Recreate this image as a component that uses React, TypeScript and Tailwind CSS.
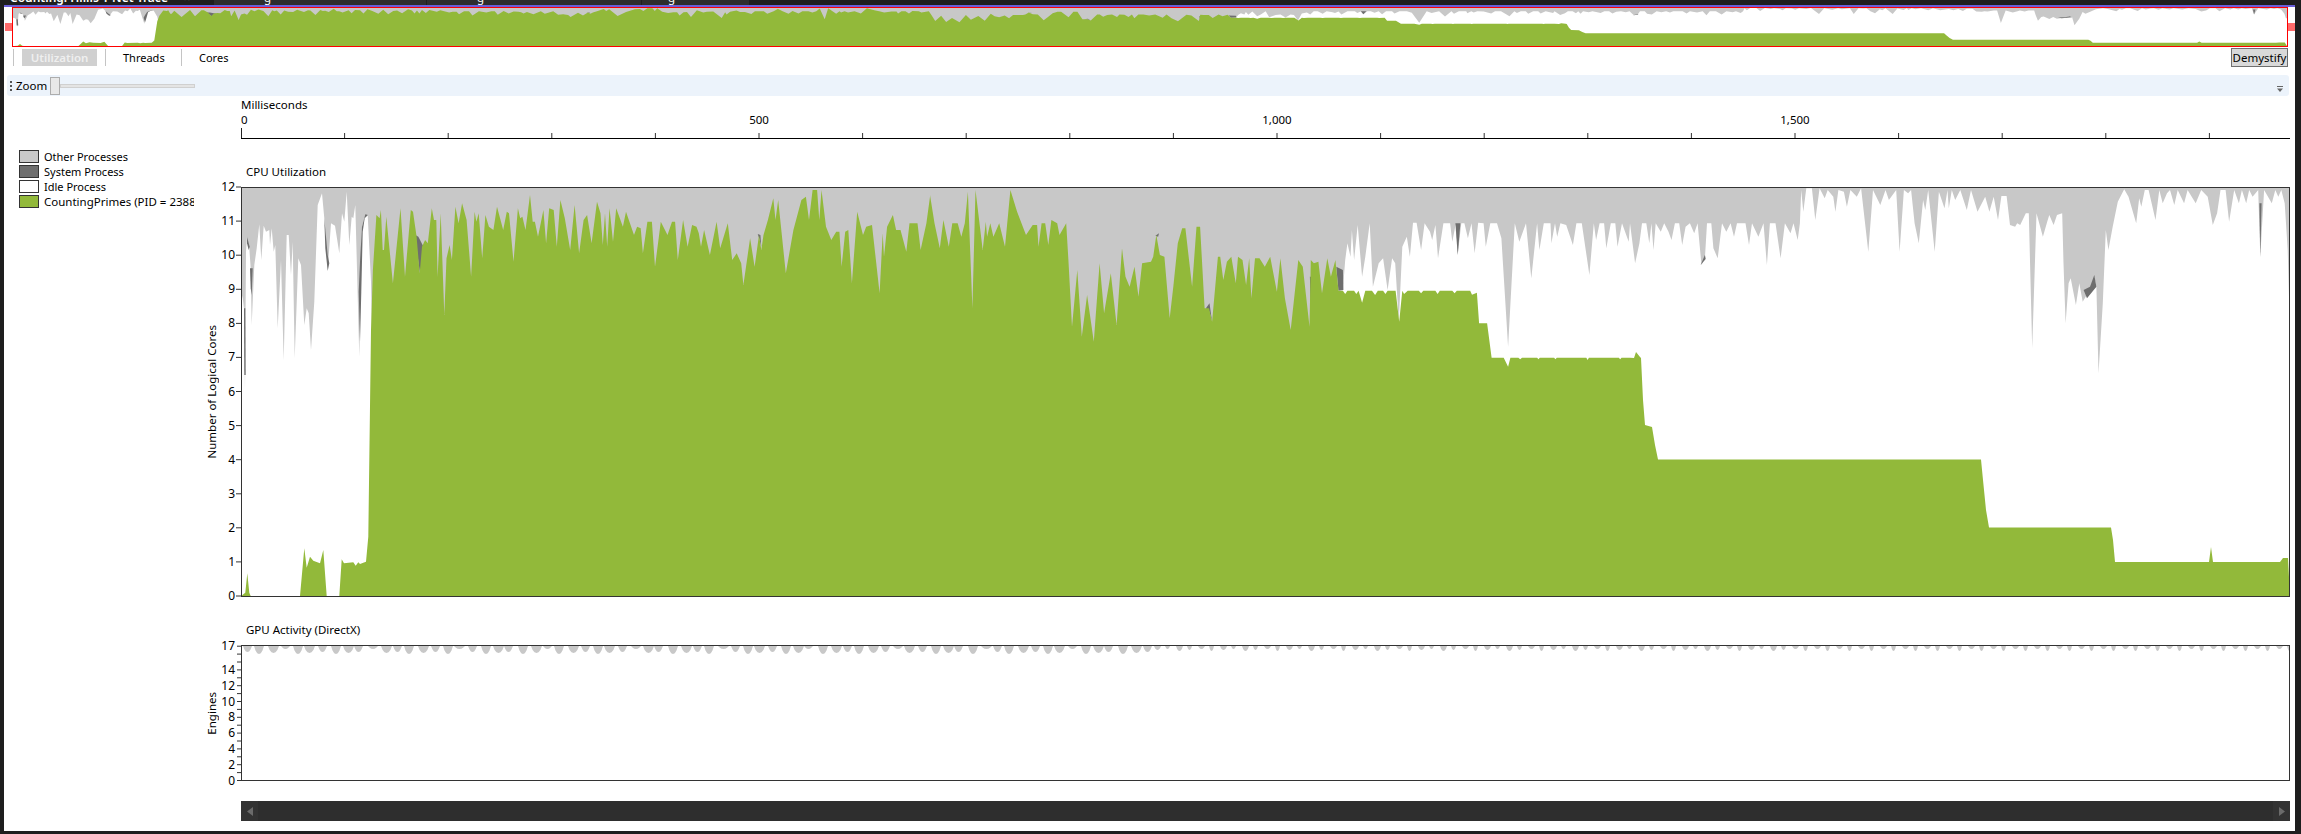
const p = (a: number[], ox: number, sx: number, oy: number, sy: number): number[][] => {
  const out: number[][] = [];
  for (let i = 0; i < a.length; i += 2) out.push([ox + a[i] / sx, oy + a[i + 1] / sy]);
  return out;
};
const z4 = (a: number[]) => p(a, 180, 3, 530, 3);
const z6 = (a: number[]) => p(a, 230, 2.24, 180, 3);
const z7 = (a: number[]) => p(a, 930, 2.24, 180, 3);
const z8 = (a: number[]) => p(a, 1630, 2.337, 180, 3);
const z11 = (a: number[]) => p(a, 236, 3, 185, 3);
const d = (pts: number[][]) => "M" + pts.map(([x, y]) => `${x.toFixed(1)},${y.toFixed(1)}`).join("L") + "Z";

const greenPts = [
  ...z4([184, 198, 186, 196, 196, 188, 202, 130, 208, 188, 212, 198, 360, 198, 373, 55, 380, 113, 390, 80, 400, 92, 420, 100, 430, 60, 440, 198, 478, 198, 485, 88, 492, 100, 520, 97, 527, 107, 535, 97, 540, 102, 558, 95, 565, 20]),
  [371, 330],
  ...z6([320, 270, 328, 105, 335, 115, 338, 90, 342, 210, 345, 210, 350, 110, 365, 310, 382, 85, 392, 290, 405, 90, 410, 95, 418, 170, 425, 280, 430, 200, 437, 180, 443, 190, 452, 85, 457, 120, 462, 120, 465, 290, 472, 100, 480, 405, 485, 235, 492, 195, 497, 240, 505, 80, 512, 130, 520, 70, 530, 120, 540, 290, 548, 95, 552, 125, 557, 100, 565, 235, 572, 105, 580, 140, 590, 150, 598, 80, 612, 150, 620, 95, 625, 100, 635, 245, 645, 85, 650, 115, 655, 110, 662, 150, 672, 45, 678, 125, 683, 125, 690, 170, 702, 90, 708, 190, 715, 85, 725, 90, 732, 200, 740, 60, 750, 115, 762, 210, 772, 75, 782, 220, 792, 120, 800, 105, 810, 190, 822, 65, 830, 100, 835, 195, 840, 100, 845, 200, 850, 85, 858, 185, 865, 85, 880, 140, 887, 95, 905, 165, 912, 140, 920, 145, 925, 220, 935, 125, 945, 125, 952, 260, 965, 125, 980, 165, 990, 125, 997, 125, 1003, 240, 1015, 120, 1025, 200, 1035, 135, 1045, 140, 1050, 160, 1055, 200, 1062, 150, 1075, 225, 1090, 125, 1098, 205, 1115, 130, 1125, 240, 1135, 220, 1145, 250, 1150, 315, 1165, 175, 1175, 260, 1185, 165, 1190, 210, 1195, 165, 1205, 120, 1217, 55, 1222, 120, 1228, 60, 1245, 280, 1262, 150, 1280, 60, 1290, 50, 1297, 120, 1305, 30, 1315, 30, 1320, 120, 1325, 30, 1335, 140, 1347, 180, 1358, 155, 1365, 155, 1370, 260, 1378, 155, 1385, 150, 1393, 310, 1405, 95, 1418, 165, 1425, 140, 1438, 135, 1455, 340, 1462, 160, 1465, 230, 1472, 140, 1485, 105, 1492, 150, 1502, 150, 1515, 215, 1522, 130, 1540, 130, 1547, 210, 1560, 130, 1568, 50]),
  ...z7([0, 45, 10, 130, 22, 205, 30, 120, 42, 200, 50, 130, 62, 130, 70, 170, 78, 130, 85, 35, 95, 385, 102, 30, 118, 210, 125, 125, 128, 170, 135, 130, 142, 170, 155, 130, 168, 200, 180, 30, 195, 95, 205, 130, 215, 165, 230, 135, 240, 135, 243, 200, 250, 130, 258, 130, 265, 195, 272, 120, 285, 130, 290, 165, 305, 130, 310, 240, 318, 440, 330, 270, 340, 470, 352, 345, 367, 485, 380, 250, 390, 400, 405, 280, 418, 435, 430, 205, 438, 290, 447, 320, 458, 260, 467, 350, 475, 250, 495, 245, 500, 230, 507, 165, 515, 225, 525, 230, 537, 415, 545, 320, 555, 190, 565, 145, 572, 145, 587, 320, 597, 140, 605, 140, 615, 385, 625, 385, 632, 425, 645, 230, 650, 230, 657, 300, 665, 245, 675, 230, 685, 310, 690, 230, 700, 240, 708, 315, 715, 235, 720, 355, 728, 235, 738, 235, 750, 260, 762, 230, 777, 335, 785, 235, 795, 355, 808, 450, 825, 240, 835, 260, 850, 440, 853, 240, 860, 250, 870, 245, 878, 340, 890, 235, 898, 290, 908, 240, 915, 332, 925, 332, 930, 342, 935, 332, 950, 332, 955, 342, 960, 332, 968, 368, 975, 332, 990, 332, 997, 345, 1003, 332, 1015, 332, 1020, 342, 1025, 332, 1043, 332, 1051, 425, 1058, 332, 1062, 342, 1070, 332, 1095, 332, 1100, 340, 1105, 332, 1132, 332, 1137, 342, 1142, 332, 1170, 332, 1175, 340, 1180, 332, 1210, 332, 1214, 344, 1225, 338, 1230, 430, 1248, 430, 1258, 533, 1285, 533, 1295, 560, 1300, 533, 1318, 533, 1322, 538, 1326, 533, 1360, 533, 1363, 538, 1366, 533, 1398, 533, 1401, 538, 1404, 533, 1470, 533, 1473, 540, 1476, 533, 1543, 533, 1546, 538, 1549, 533, 1568, 533]),
  [1634, 358], [1636, 352], [1640, 357], [1641, 358], [1643, 400], [1645, 425], [1652, 427], [1655, 445], [1658, 459.5], [1981, 459.5], [1983, 480], [1986, 510], [1989, 527.5], [2111, 527.5], [2113, 540], [2115, 562], [2209, 562], [2211, 547], [2213, 562], [2280, 562], [2283, 558], [2288, 558], [2290, 596],
];
const whiteLeft = [
  [241, 596],
  ...z11([15, 320, 20, 340, 24, 370, 27, 618, 30, 200, 33, 155, 40, 190, 44, 250, 47, 420, 55, 240, 62, 190, 70, 118, 76, 225, 83, 122, 90, 140, 100, 135, 102, 180, 107, 130, 113, 200, 118, 180, 125, 430, 135, 225, 143, 525, 152, 150, 158, 150, 165, 270, 170, 170, 176, 520, 187, 220, 195, 240, 205, 420, 212, 370, 218, 385, 225, 495, 235, 350, 245, 60, 258, 25, 265, 100, 275, 255, 285, 115, 297, 122, 310, 205, 318, 85, 325, 110, 332, 20, 340, 180, 347, 95, 352, 100, 358, 60, 370, 515, 378, 125, 388, 90, 395, 90, 405, 290, 410, 570]),
  [380, 596],
];
const whiteRight = [
  [1335, 596],
  ...z7([915, 330, 925, 330, 930, 240, 935, 190, 942, 230, 945, 150, 950, 240, 958, 135, 968, 290, 975, 230, 985, 130, 992, 320, 1005, 250, 1015, 235, 1025, 330, 1035, 235, 1042, 250, 1050, 425, 1058, 200, 1068, 170, 1075, 230, 1082, 128, 1090, 128, 1100, 210, 1108, 130, 1120, 155, 1125, 180, 1132, 135, 1138, 235, 1150, 130, 1165, 130, 1170, 185, 1178, 130, 1182, 225, 1190, 130, 1197, 130, 1205, 175, 1213, 130, 1220, 220, 1228, 128, 1240, 130, 1245, 200, 1255, 130, 1270, 130, 1280, 175, 1295, 500, 1310, 130, 1320, 185, 1335, 130, 1347, 295, 1360, 130, 1365, 210, 1375, 130, 1390, 130, 1392, 190, 1400, 130, 1405, 170, 1412, 130, 1425, 135, 1440, 195, 1448, 130, 1460, 130, 1477, 285, 1487, 130, 1492, 180, 1500, 130, 1510, 130, 1515, 205, 1525, 130, 1535, 130, 1540, 200, 1550, 130, 1565, 185]),
  ...z8([0, 130, 12, 250, 22, 190, 28, 130, 38, 130, 45, 190, 50, 130, 55, 210, 60, 130, 72, 155, 80, 130, 90, 155, 97, 180, 105, 130, 115, 130, 122, 195, 130, 140, 140, 130, 150, 160, 158, 130, 167, 255, 175, 235, 180, 130, 190, 130, 195, 205, 205, 235, 215, 130, 225, 155, 235, 130, 243, 170, 250, 130, 270, 130, 278, 195, 285, 130, 300, 170, 312, 130, 320, 255, 327, 130, 340, 130, 352, 235, 362, 130, 375, 160, 382, 130, 392, 180, 397, 130, 400, 30, 405, 95, 412, 25, 425, 25, 433, 120, 443, 25, 455, 55, 462, 30, 475, 50, 480, 95, 487, 30, 500, 35, 507, 80, 515, 30, 530, 50, 540, 25, 557, 215, 568, 30, 585, 75, 597, 30, 605, 60, 622, 30, 630, 215, 640, 30, 650, 40, 657, 30, 665, 130, 675, 190, 685, 60, 690, 90, 697, 30, 712, 215, 722, 35, 735, 85, 742, 30, 745, 85, 752, 30, 760, 60, 772, 30, 787, 90, 797, 30, 812, 95, 830, 50, 840, 95, 850, 50, 860, 120, 868, 48, 880, 48, 888, 135, 900, 140, 905, 130, 912, 135, 925, 100, 932, 100, 940, 505, 950, 100, 965, 170, 975, 125, 980, 105, 990, 135, 998, 105, 1010, 100, 1013, 250, 1018, 430, 1025, 310, 1030, 295, 1042, 375, 1050, 310, 1058, 365, 1065, 350, 1075, 330, 1085, 290, 1090, 320, 1095, 580, 1105, 370, 1112, 150, 1118, 210, 1128, 140, 1140, 65, 1155, 28, 1165, 50, 1183, 130, 1190, 55, 1195, 80, 1203, 30, 1212, 30, 1228, 120, 1237, 30, 1245, 70, 1255, 40, 1262, 30, 1272, 75, 1280, 30, 1295, 70, 1303, 30, 1322, 70, 1335, 30, 1350, 50, 1362, 135, 1372, 100, 1380, 30, 1392, 30, 1400, 125, 1412, 30, 1423, 70, 1430, 30, 1440, 70, 1447, 30, 1455, 50, 1468, 30, 1473, 230, 1482, 30, 1500, 70, 1508, 30, 1515, 50, 1522, 30, 1530, 70, 1537, 210, 1540, 350, 1545, 350]),
  [2290, 596],
];
const darkShapes = [
  z11([24, 370, 28, 370, 29, 570, 25, 570]),
  z11([33, 155, 41, 185, 38, 195, 33, 175]),
  z11([42, 250, 50, 250, 47, 330, 44, 310]),
  z11([265, 100, 275, 210, 280, 235, 275, 258, 268, 190]),
  z11([378, 125, 388, 88, 396, 90, 386, 100, 380, 140, 376, 320, 372, 470, 368, 320, 372, 230]),
  z6([415, 165, 422, 170, 435, 205, 426, 285, 418, 205]),
  z6([1182, 162, 1188, 165, 1190, 200, 1186, 178]),
  z7([910, 260, 925, 270, 926, 330, 915, 332]),
  z7([1177, 130, 1188, 130, 1182, 225]),
  z7([851, 290, 855, 290, 853, 400]),
  z7([618, 385, 626, 370, 632, 425, 626, 395]),
  z7([505, 167, 513, 160, 511, 170]),
  z8([1060, 330, 1075, 320, 1085, 285, 1090, 320, 1068, 355]),
  z8([1471, 70, 1476, 70, 1473, 230]),
  z8([165, 255, 175, 225, 177, 237]),
];

function CpuArea() {
  return (
    <>
      <rect x="241" y="187" width="2049" height="409" fill="#c8c8c8" />
      <path d={d(whiteLeft)} fill="#ffffff" />
      <path d={d(whiteRight)} fill="#ffffff" />
      {darkShapes.map((s, i) => (
        <path key={i} d={d(s)} fill="#6e6e6e" />
      ))}
      <path d={d(greenPts)} fill="#92b93a" />
    </>
  );
}

function gpuPath() {
  const pts: number[][] = [[242, 646]];
  let x = 243;
  let i = 0;
  while (x < 2288) {
    const early = x < 1150;
    const period = early ? 11 + ((i * 7) % 4) : 11;
    const w = early ? 9 + (i % 3) : 5 + (i % 2) * 2;
    const depth = early ? (i % 7 === 3 ? 3 : 6 + ((i * 5) % 3)) : x < 1800 ? 5 - (i % 3) : 5 - (i % 2) * 2;
    pts.push(
      [x, 646],
      [x + w * 0.15, 646 + depth * 0.55],
      [x + w * 0.32, 646 + depth * 0.9],
      [x + w * 0.5, 646 + depth],
      [x + w * 0.68, 646 + depth * 0.9],
      [x + w * 0.85, 646 + depth * 0.55],
      [x + w, 646],
    );
    x += period;
    i++;
  }
  pts.push([2289, 646]);
  return d(pts);
}

const timeTicks = Array.from({ length: 20 }, (_, i) => 241 + i * 103.6);
const cpuLabels = Array.from({ length: 13 }, (_, i) => i);
const gpuTicks = Array.from({ length: 18 }, (_, i) => i);
const gpuLabels = [0, 2, 4, 6, 8, 10, 12, 14, 17];

export default function App() {
  return (
    <div className="w-[2301px] h-[834px] overflow-hidden bg-[#1e1e1e] flex flex-col font-['Noto_Sans',sans-serif] text-[11.5px] leading-[16px] text-black">
      <div className="h-[5px] overflow-hidden flex text-white shrink-0">
        <div className="w-[213px] pl-[10px] font-semibold shrink-0">
          <div className="-mt-[10px] whitespace-nowrap text-[12px]">Counting: Hillis-T Net Trace &nbsp;&nbsp;&nbsp; ×</div>
        </div>
        <div className="w-[212px] ml-px bg-[#2d2d2d] pl-[50px]"><div className="-mt-[10px]">g</div></div>
        <div className="w-[214px] ml-px bg-[#2d2d2d] pl-[50px]"><div className="-mt-[10px]">g</div></div>
        <div className="w-[107px] ml-px bg-[#2d2d2d] pl-[26px]"><div className="-mt-[10px]">g</div></div>
      </div>
      <div className="h-[2px] ml-[4px] mr-[6px] bg-[#6a5fd8] shrink-0" />
      <div className="flex-1 ml-[4px] mr-[6px] mb-[3px] bg-white flex flex-col min-h-0">
        <div className="relative h-[40px] ml-[8px] mr-[7px] border border-[#ff0000] shrink-0">
          <svg className="block w-full h-full" viewBox="241 187 2049 409" preserveAspectRatio="none">
            <CpuArea />
          </svg>
          <div className="absolute -left-[8px] top-[15px] w-[7px] h-[8px] bg-[#ff6b6b]" />
          <div className="absolute -right-[8px] top-[15px] w-[7px] h-[8px] bg-[#ff6b6b]" />
        </div>
        <div className="h-[20px] flex items-start shrink-0">
          <div className="ml-[9px] mt-[2px] w-px h-[17px] bg-[#c4c4c4]" />
          <div className="ml-[8px] mt-[2px] w-[75px] h-[17px] bg-[#d0d0d0] text-[#efefef] font-semibold flex items-center justify-center">Utilization</div>
          <div className="ml-[8px] mt-[2px] w-px h-[17px] bg-[#c4c4c4]" />
          <div className="ml-[17px] mt-[2px] w-[58px] h-[17px] flex items-center text-[11px]">Threads</div>
          <div className="mt-[2px] w-px h-[17px] bg-[#c4c4c4]" />
          <div className="ml-[17px] mt-[2px] h-[17px] flex items-center text-[11px]">Cores</div>
          <div className="ml-auto mr-[7px] mt-[1px] w-[57px] h-[19px] bg-[#d9d9d9] border border-[#6f6f6f] flex items-center justify-center">Demystify</div>
        </div>
        <div className="relative ml-[3px] mr-[6px] mt-[8px] h-[21px] bg-[#ecf3fb] rounded-[3px] flex items-center shrink-0">
          <div className="ml-[3px] flex flex-col gap-[2px]">
            <div className="w-[2px] h-[2px] bg-[#555]" />
            <div className="w-[2px] h-[2px] bg-[#555]" />
            <div className="w-[2px] h-[2px] bg-[#555]" />
          </div>
          <span className="ml-[4px] w-[34px]">Zoom</span>
          <div className="w-[10px] h-[18px] bg-[#e8e8e8] border border-[#adadad]" />
          <div className="w-[135px] h-[4px] bg-[#e4e4e4] border border-[#d0d0d0]" />
          <svg className="absolute right-[5px] top-[11px]" width="7" height="7" viewBox="0 0 7 7">
            <path d="M0 0.5H6" stroke="#666" strokeWidth="1" />
            <path d="M0 2.5H6L3 6Z" fill="#666" />
          </svg>
        </div>
        <div className="flex-1 flex min-h-0">
          <div className="w-[190px] pl-[15px] pt-[53px] overflow-hidden shrink-0 text-[11px]">
            {[
              ["#c8c8c8", "Other Processes", ""],
              ["#6e6e6e", "System Process", ""],
              ["#ffffff", "Idle Process", ""],
              ["#92b93a", "CountingPrimes (PID = 2388)", "text-[11.5px]"],
            ].map(([c, t, size]) => (
              <div key={t} className="flex items-center h-[15px] whitespace-nowrap">
                <div className="w-[20px] h-[13px] border border-[#333] shrink-0" style={{ backgroundColor: c }} />
                <span className={`ml-[5px] ${size}`}>{t}</span>
              </div>
            ))}
          </div>
          <div className="w-[2096px] flex flex-col">
            <div className="pl-[47px] pt-[1px] h-[16px]">Milliseconds</div>
            <svg className="ml-[47px] block overflow-visible" width="2049" height="27" viewBox="241 112 2049 27">
              <path d="M241 138.5H2290" stroke="#000" strokeWidth="1" />
              <path d="M241.5 128V138" stroke="#222" strokeWidth="1" />
              {timeTicks.slice(1).map((x) => (
                <path key={x} d={`M${x.toFixed(1)} 133V138`} stroke="#333" strokeWidth="1" />
              ))}
              <text x="241" y="124" fontSize="11.5" fill="#000">0</text>
              <text x="759" y="124" fontSize="11.5" textAnchor="middle" fill="#000">500</text>
              <text x="1277" y="124" fontSize="11.5" textAnchor="middle" fill="#000">1,000</text>
              <text x="1795" y="124" fontSize="11.5" textAnchor="middle" fill="#000">1,500</text>
            </svg>
            <div className="pl-[52px] mt-[25px] h-[16px]">CPU Utilization</div>
            <div className="mt-[7px] flex h-[410px]">
              <div className="w-[26px] flex items-center justify-end">
                <span className="[writing-mode:vertical-rl] rotate-180 whitespace-nowrap">Number of Logical Cores</span>
              </div>
              <svg className="block overflow-visible" width="21" height="410" viewBox="220 187 21 410">
                {cpuLabels.map((v) => {
                  const y = 596 - v * 34.08;
                  return (
                    <g key={v}>
                      <path d={`M236 ${y.toFixed(1)}H241`} stroke="#333" strokeWidth="1" />
                      <text x="235" y={y + 4} fontSize="12" textAnchor="end" fill="#000">{v}</text>
                    </g>
                  );
                })}
              </svg>
              <div className="w-[2049px] h-[410px] border border-[#333]">
                <svg className="block w-full h-full" viewBox="242 188 2047 408" preserveAspectRatio="none">
                  <CpuArea />
                </svg>
              </div>
            </div>
            <div className="pl-[52px] mt-[25px] h-[16px]">GPU Activity (DirectX)</div>
            <div className="mt-[7px] flex h-[136px]">
              <div className="w-[26px] flex items-center justify-end">
                <span className="[writing-mode:vertical-rl] rotate-180 whitespace-nowrap">Engines</span>
              </div>
              <svg className="block overflow-visible" width="21" height="136" viewBox="220 645 21 136">
                {gpuTicks.map((v) => {
                  const y = 780.5 - v * 7.9;
                  return <path key={v} d={`M237 ${y.toFixed(1)}H241`} stroke="#333" strokeWidth="1" />;
                })}
                {gpuLabels.map((v) => (
                  <text key={v} x="235" y={780.5 - v * 7.9 + 4} fontSize="12" textAnchor="end" fill="#000">{v}</text>
                ))}
              </svg>
              <div className="w-[2049px] h-[136px] border border-[#333]">
                <svg className="block w-full h-full" viewBox="242 646 2047 134" preserveAspectRatio="none">
                  <path d={gpuPath()} fill="#c8c8c8" />
                </svg>
              </div>
            </div>
            <div className="ml-[47px] mt-[20px] w-[2049px] h-[20px] bg-[#2e2e2e] flex justify-between">
              <div className="w-[17px] h-full bg-[#333333] flex items-center justify-center">
                <svg width="6" height="9" viewBox="0 0 6 9"><path d="M6 0V9L0 4.5Z" fill="#6b6b6b" /></svg>
              </div>
              <div className="w-[17px] h-full bg-[#333333] flex items-center justify-center">
                <svg width="6" height="9" viewBox="0 0 6 9"><path d="M0 0V9L6 4.5Z" fill="#6b6b6b" /></svg>
              </div>
            </div>
          </div>
        </div>
      </div>
    </div>
  );
}
